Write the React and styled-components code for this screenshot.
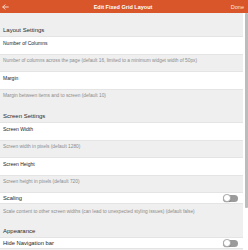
import React from "react";
import styled, { createGlobalStyle } from "styled-components";

const Global = createGlobalStyle`
  html, body { margin: 0; padding: 0; background: #ffffff; }
  body { font-family: "Liberation Sans", Arial, sans-serif; -webkit-font-smoothing: antialiased; }
  * { box-sizing: border-box; }
`;

const Screen = styled.div`
  width: 248px;
  height: 250px;
  overflow: hidden;
  display: flex;
  flex-direction: column;
  background: #ffffff;
`;

const Header = styled.header`
  height: 13px;
  flex: none;
  background: #d9562b;
  display: grid;
  grid-template-columns: 30px 1fr 30px;
  align-items: center;
  color: #ffffff;
  padding: 0 4px 0 2px;
`;

const BackButton = styled.span`
  display: flex;
  align-items: center;
  svg { display: block; }
`;

const Title = styled.h1`
  margin: 0;
  font-size: 5.5px;
  font-weight: 700;
  text-align: center;
  white-space: nowrap;
`;

const Done = styled.span`
  font-size: 5.5px;
  text-align: right;
  color: #fbe6dd;
`;

const Body = styled.div`
  flex: 1;
  display: flex;
  min-height: 0;
`;

const Content = styled.div`
  flex: 1;
  background: #efefef;
  display: flex;
  flex-direction: column;
`;

const Gutter = styled.div`
  width: 5px;
  flex: none;
  background: #ffffff;
  padding-left: 2px;
`;

const Thumb = styled.div`
  width: 2.5px;
  height: 195px;
  background: #bcbcbc;
  border-radius: 1px;
`;

const SectionTitle = styled.div`
  height: ${(p) => p.$h}px;
  display: flex;
  align-items: flex-end;
  padding: 0 3px 3px;
  font-size: 6px;
  color: #2a2a2a;
`;

const InputRow = styled.div`
  height: 19px;
  background: #ffffff;
  padding: 3px 3px 0;
  border-top: 0.5px solid #e4e4e4;
  border-bottom: 0.5px solid #e4e4e4;
`;

const Label = styled.div`
  font-size: ${(p) => p.$size || 5}px;
  line-height: 6px;
  color: #1c1c1c;
  white-space: nowrap;
`;

const Desc = styled.div`
  height: ${(p) => p.$h || 16}px;
  padding: ${(p) => p.$pt || 3}px 3px 0;
  font-size: 4.8px;
  line-height: 6px;
  color: #8c8c8c;
  white-space: nowrap;
`;

const SwitchRow = styled.div`
  height: 12px;
  background: #ffffff;
  display: flex;
  align-items: center;
  justify-content: space-between;
  padding: 0 5px 0 3px;
  border-top: 0.5px solid #e4e4e4;
  border-bottom: 0.5px solid #e4e4e4;
`;

const Track = styled.span`
  width: 15px;
  height: 7px;
  border-radius: 4px;
  background: #9b9b9b;
  display: flex;
  align-items: center;
`;

const Knob = styled.span`
  width: 7.5px;
  height: 7.5px;
  border-radius: 50%;
  background: #ffffff;
  border: 0.6px solid #a8a8a8;
  box-shadow: 0 0.5px 1px rgba(0, 0, 0, 0.2);
`;

const Toggle = () => (
  <Track>
    <Knob />
  </Track>
);

export default function App() {
  return (
    <>
      <Global />
      <Screen>
        <Header>
          <BackButton>
            <svg width="7" height="6" viewBox="0 0 7 6" fill="none" stroke="#fbe6dd" strokeWidth="0.9" strokeLinecap="round" strokeLinejoin="round">
              <path d="M6.3 3H0.8M3 0.8L0.8 3L3 5.2" />
            </svg>
          </BackButton>
          <Title>Edit Fixed Grid Layout</Title>
          <Done>Done</Done>
        </Header>
        <Body>
          <Content>
            <SectionTitle $h={23}>Layout Settings</SectionTitle>
            <InputRow>
              <Label>Number of Columns</Label>
            </InputRow>
            <Desc>Number of columns across the page (default 16, limited to a minimum widget width of 50px)</Desc>
            <InputRow>
              <Label>Margin</Label>
            </InputRow>
            <Desc>Margin between items and to screen (default 10)</Desc>
            <SectionTitle $h={16}>Screen Settings</SectionTitle>
            <InputRow>
              <Label>Screen Width</Label>
            </InputRow>
            <Desc>Screen width in pixels (default 1280)</Desc>
            <InputRow>
              <Label>Screen Height</Label>
            </InputRow>
            <Desc>Screen height in pixels (default 720)</Desc>
            <SwitchRow>
              <Label $size={5.8}>Scaling</Label>
              <Toggle />
            </SwitchRow>
            <Desc $pt={5}>Scale content to other screen widths (can lead to unexpected styling issues) (default false)</Desc>
            <SectionTitle $h={17}>Appearance</SectionTitle>
            <SwitchRow>
              <Label $size={5.8}>Hide Navigation bar</Label>
              <Toggle />
            </SwitchRow>
          </Content>
          <Gutter>
            <Thumb />
          </Gutter>
        </Body>
      </Screen>
    </>
  );
}
